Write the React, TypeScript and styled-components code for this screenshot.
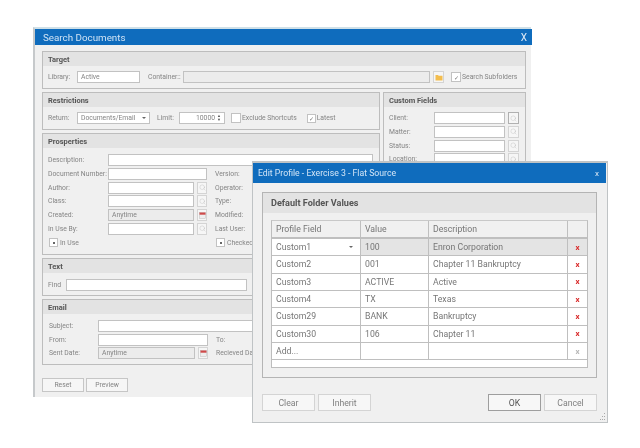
import React from "react";
import styled, { createGlobalStyle } from "styled-components";
import { Search } from "lucide-react";

const GlobalStyle = createGlobalStyle`
  html, body {
    margin: 0;
    background: #fff;
    font-family: Roboto, "Liberation Sans", sans-serif;
  }
`;

const Desktop = styled.div`
  position: relative;
  width: 640px;
  height: 448px;
  overflow: hidden;
  filter: blur(0.25px);
`;

const BackWindow = styled.section`
  position: absolute;
  left: 33px;
  top: 27px;
  width: 498px;
  height: 370px;
  box-sizing: border-box;
  background: #f0f0f0;
  border-left: 2px solid #c6c9cb;
  border-top: 2px solid #cfe0e8;
`;

const TitleBar = styled.header`
  display: flex;
  align-items: center;
  justify-content: space-between;
  height: 16px;
  margin-right: -1px;
  padding: 0 5px 0 8px;
  background: #0f6cbd;
  color: #cfe3f5;
  font-size: 9.8px;
`;

const CloseX = styled.span<{ $big?: boolean }>`
  color: #dfeaf6;
  font-size: ${(p) => (p.$big ? 10 : 8)}px;
`;

const BackBody = styled.div`
  display: grid;
  grid-template-columns: 338px 143px;
  gap: 3px;
  padding: 6px 5px 0 7px;
`;

const Panel = styled.div<{ $wide?: boolean; $tall?: boolean }>`
  box-sizing: border-box;
  border: 1px solid #bdbdbd;
  grid-column: ${(p) => (p.$wide ? "1 / -1" : "auto")};
  grid-row: ${(p) => (p.$tall ? "span 2" : "auto")};
`;

const PanelHead = styled.div`
  height: 14px;
  line-height: 15px;
  padding-left: 5px;
  background: #e3e3e3;
  color: #555;
  font-size: 7.5px;
  font-weight: 700;
`;

const PanelBody = styled.div<{ $pad?: string }>`
  display: flex;
  flex-direction: column;
  gap: 1.8px;
  padding: ${(p) => p.$pad || "5px 6px 5px 5px"};
`;

const Row = styled.div`
  display: flex;
  align-items: center;
  height: 12px;
`;

const Label = styled.span<{ $w?: number; $ml?: number }>`
  flex: none;
  width: ${(p) => (p.$w ? p.$w + "px" : "auto")};
  margin-left: ${(p) => p.$ml ?? 0}px;
  color: #848484;
  font-size: 6.8px;
  white-space: nowrap;
`;

const Box = styled.div<{ $w: number; $grey?: boolean; $right?: boolean }>`
  flex: none;
  display: flex;
  align-items: center;
  justify-content: ${(p) => (p.$right ? "flex-end" : "space-between")};
  box-sizing: border-box;
  width: ${(p) => p.$w}px;
  height: 12px;
  padding: 0 3px;
  background: ${(p) => (p.$grey ? "#ececec" : "#fff")};
  border: 1px solid #c2c2c2;
  color: #848484;
  font-size: 6.8px;
`;

const IconBtn = styled.div<{ $w?: number; $strong?: boolean }>`
  flex: none;
  display: flex;
  align-items: center;
  justify-content: center;
  box-sizing: border-box;
  width: ${(p) => p.$w ?? 11}px;
  height: 12px;
  margin-left: 3px;
  background: #f6f6f6;
  border: 1px solid ${(p) => (p.$strong ? "#b0b0b0" : "#d4d4d4")};
  color: #b5b5b5;
`;

const Tick = styled.div<{ $ml?: number; $size?: number }>`
  flex: none;
  display: flex;
  align-items: center;
  justify-content: center;
  box-sizing: border-box;
  width: ${(p) => p.$size ?? 10}px;
  height: ${(p) => p.$size ?? 10}px;
  margin-left: ${(p) => p.$ml ?? 0}px;
  margin-right: 1px;
  background: #fff;
  border: 1px solid #c2c2c2;
  color: #777;
  font-size: 6px;
`;

const Dot = styled.span`
  width: 2px;
  height: 2px;
  background: #666;
`;

const SpinArrows = styled.span`
  display: flex;
  flex-direction: column;
  margin-left: 2px;
  color: #555;
  font-size: 4px;
  line-height: 4px;
`;

const Caret = styled.span`
  width: 0;
  height: 0;
  border-left: 2px solid transparent;
  border-right: 2px solid transparent;
  border-top: 2px solid #666;
`;

const FootRow = styled.div`
  display: flex;
  gap: 2px;
  padding: 13px 0 0 7px;
`;

const SmallButton = styled.button`
  width: 42px;
  height: 14px;
  padding: 0;
  background: #f6f6f6;
  border: 1px solid #c6c6c6;
  color: #848484;
  font-family: inherit;
  font-size: 6.8px;
`;

const Dialog = styled.section`
  position: absolute;
  left: 252px;
  top: 161px;
  width: 356px;
  height: 262px;
  box-sizing: border-box;
  background: #f0f0f0;
  border: 1px solid #bfc3c5;
  border-top-width: 2px;
`;

const DialogTitle = styled.header`
  display: flex;
  align-items: center;
  justify-content: space-between;
  height: 20px;
  margin-right: 1px;
  padding: 0 7px 0 5px;
  background: #0f6cbd;
  color: #d3e5f6;
  font-size: 8.7px;
`;

const DialogBody = styled.div`
  padding: 9px 10px 0 9px;
`;

const DialogPanel = styled.div`
  box-sizing: border-box;
  border: 1px solid #b4b4b4;
  height: 186px;
`;

const DialogHead = styled.div`
  height: 20px;
  line-height: 20px;
  padding-left: 8px;
  background: #e3e3e3;
  color: #555;
  font-size: 9.1px;
  font-weight: 700;
`;

const Grid = styled.div`
  margin: 7px 8px 0;
  background: #fff;
  border: 1px solid #bdbdbd;
  border-top-color: #c8c8c8;
  height: 148px;
  box-sizing: border-box;
`;

const GridRow = styled.div<{ $head?: boolean; $active?: boolean }>`
  display: grid;
  grid-template-columns: 89px 68px 139px 1fr;
  height: ${(p) => (p.$head ? "18px" : "17.33px")};
  box-sizing: border-box;
  background: ${(p) => (p.$head ? "#f0f0f0" : p.$active ? "#e4e4e4" : "#fff")};
  border-bottom: ${(p) => (p.$head ? 2 : 1)}px solid #bfbfbf;
  color: #767676;
  font-size: 8.7px;
`;

const Cell = styled.div<{ $white?: boolean }>`
  display: flex;
  align-items: center;
  justify-content: space-between;
  padding: 0 7px 0 4px;
  background: ${(p) => (p.$white ? "#fff" : "transparent")};
  border-right: 1px solid #bfbfbf;
  white-space: nowrap;
  &:last-child {
    border-right: 0;
    justify-content: center;
    padding: 0;
  }
`;

const RemoveX = styled.span<{ $off?: boolean }>`
  color: ${(p) => (p.$off ? "#b8b8b8" : "#d92b2b")};
  font-size: 8px;
  font-weight: 700;
`;

const DialogFoot = styled.div`
  display: flex;
  gap: 3px;
  margin-top: 16px;
`;

const Btn = styled.button<{ $strong?: boolean; $push?: boolean }>`
  width: 53px;
  height: 17px;
  padding: 0;
  margin-left: ${(p) => (p.$push ? "auto" : "0")};
  background: #f7f7f7;
  border: 1px solid ${(p) => (p.$strong ? "#9e9e9e" : "#d4d4d4")};
  color: ${(p) => (p.$strong ? "#555" : "#808080")};
  font-family: inherit;
  font-size: 8.7px;
`;

const Grip = styled.svg`
  position: absolute;
  right: 1px;
  bottom: 1px;
`;

const Mag = () => <Search size={7} strokeWidth={1.2} />;

const CalendarIcon = () => (
  <svg width="7" height="7" viewBox="0 0 7 7">
    <rect x="0.5" y="0.5" width="6" height="6" fill="#eee" stroke="#bbb" strokeWidth="0.5" />
    <rect x="0.5" y="0.5" width="6" height="2.2" fill="#cf4a4a" />
  </svg>
);

const FolderIcon = () => (
  <svg width="8" height="7" viewBox="0 0 8 7">
    <path d="M0.5 1h2.5l0.7 0.8h3.8v4.7h-7z" fill="#f3bd4e" />
  </svg>
);

const GripIcon = () => (
  <Grip width="8" height="8" viewBox="0 0 8 8">
    <g fill="#a9a9a9">
      <rect x="6" y="0" width="1" height="1" />
      <rect x="4" y="3" width="1" height="1" />
      <rect x="6" y="3" width="1" height="1" />
      <rect x="2" y="6" width="1" height="1" />
      <rect x="4" y="6" width="1" height="1" />
      <rect x="6" y="6" width="1" height="1" />
    </g>
  </Grip>
);

const customFields = ["Client:", "Matter:", "Status:", "Location:"];

const tableRows = [
  ["Custom2", "001", "Chapter 11 Bankruptcy"],
  ["Custom3", "ACTIVE", "Active"],
  ["Custom4", "TX", "Texas"],
  ["Custom29", "BANK", "Bankruptcy"],
  ["Custom30", "106", "Chapter 11"],
];

export default function App() {
  return (
    <Desktop>
      <GlobalStyle />
      <BackWindow>
        <TitleBar>
          <span>Search Documents</span>
          <CloseX $big>X</CloseX>
        </TitleBar>
        <BackBody>
          <Panel $wide>
            <PanelHead>Target</PanelHead>
            <PanelBody>
              <Row>
                <Label $w={29}>Library:</Label>
                <Box $w={63}>Active</Box>
                <Label $w={35} $ml={8}>Container::</Label>
                <Box $w={247} $grey />
                <IconBtn><FolderIcon /></IconBtn>
                <Tick $ml={7}>✓</Tick>
                <Label>Search Subfolders</Label>
              </Row>
            </PanelBody>
          </Panel>

          <Panel>
            <PanelHead>Restrictions</PanelHead>
            <PanelBody>
              <Row>
                <Label $w={29}>Return:</Label>
                <Box $w={73}>Documents/Email<Caret /></Box>
                <Label $w={22} $ml={7}>Limit:</Label>
                <Box $w={46} $right>10000<SpinArrows><span>▲</span><span>▼</span></SpinArrows></Box>
                <Tick $ml={6}></Tick>
                <Label>Exclude Shortcuts</Label>
                <Tick $ml={10} $size={9}>✓</Tick>
                <Label>Latest</Label>
              </Row>
            </PanelBody>
          </Panel>

          <Panel $tall>
            <PanelHead>Custom Fields</PanelHead>
            <PanelBody>
              {customFields.map((name, i) => (
                <Row key={name}>
                  <Label $w={45}>{name}</Label>
                  <Box $w={71} />
                  <IconBtn $strong={i === 0}><Mag /></IconBtn>
                </Row>
              ))}
            </PanelBody>
          </Panel>

          <Panel>
            <PanelHead>Prosperties</PanelHead>
            <PanelBody $pad="6px 6px 5px 5px">
              <Row><Label $w={60}>Description:</Label><Box $w={265} /></Row>
              <Row>
                <Label $w={60}>Document Number:</Label>
                <Box $w={99} />
                <Label $ml={8}>Version:</Label>
              </Row>
              <Row>
                <Label $w={60}>Author:</Label>
                <Box $w={86} />
                <IconBtn $w={10}><Mag /></IconBtn>
                <Label $ml={8}>Operator:</Label>
              </Row>
              <Row>
                <Label $w={60}>Class:</Label>
                <Box $w={86} />
                <IconBtn $w={10}><Mag /></IconBtn>
                <Label $ml={8}>Type:</Label>
              </Row>
              <Row>
                <Label $w={60}>Created:</Label>
                <Box $w={86} $grey>Anytime</Box>
                <IconBtn $w={10}><CalendarIcon /></IconBtn>
                <Label $ml={8}>Modified:</Label>
              </Row>
              <Row>
                <Label $w={60}>In Use By:</Label>
                <Box $w={86} />
                <IconBtn $w={10}><Mag /></IconBtn>
                <Label $ml={8}>Last User:</Label>
              </Row>
              <Row>
                <Tick $ml={1} $size={9}><Dot /></Tick>
                <Label $w={20} $ml={1}>In Use</Label>
                <Tick $ml={136} $size={9}><Dot /></Tick>
                <Label $ml={1}>Checked Out</Label>
              </Row>
            </PanelBody>
          </Panel>

          <Panel $wide>
            <PanelHead>Text</PanelHead>
            <PanelBody $pad="6px 6px 4px 5px">
              <Row>
                <Label $w={18}>Find</Label>
                <Box $w={181} />
              </Row>
            </PanelBody>
          </Panel>

          <Panel $wide>
            <PanelHead>Email</PanelHead>
            <PanelBody $pad="6px 6px 5px 6px">
              <Row><Label $w={49}>Subject:</Label><Box $w={265} /></Row>
              <Row>
                <Label $w={49}>From:</Label>
                <Box $w={110} />
                <Label $ml={8}>To:</Label>
              </Row>
              <Row>
                <Label $w={49}>Sent Date:</Label>
                <Box $w={97} $grey>Anytime</Box>
                <IconBtn $w={10}><CalendarIcon /></IconBtn>
                <Label $ml={8}>Recieved Date:</Label>
              </Row>
            </PanelBody>
          </Panel>
        </BackBody>
        <FootRow>
          <SmallButton>Reset</SmallButton>
          <SmallButton>Preview</SmallButton>
        </FootRow>
      </BackWindow>

      <Dialog>
        <DialogTitle>
          <span>Edit Profile - Exercise 3 - Flat Source</span>
          <CloseX>x</CloseX>
        </DialogTitle>
        <DialogBody>
          <DialogPanel>
            <DialogHead>Default Folder Values</DialogHead>
            <Grid>
              <GridRow $head>
                <Cell>Profile Field</Cell>
                <Cell>Value</Cell>
                <Cell>Description</Cell>
                <Cell />
              </GridRow>
              <GridRow $active>
                <Cell $white>Custom1<Caret /></Cell>
                <Cell>100</Cell>
                <Cell>Enron Corporation</Cell>
                <Cell><RemoveX>x</RemoveX></Cell>
              </GridRow>
              {tableRows.map((r) => (
                <GridRow key={r[0]}>
                  <Cell>{r[0]}</Cell>
                  <Cell>{r[1]}</Cell>
                  <Cell>{r[2]}</Cell>
                  <Cell><RemoveX>x</RemoveX></Cell>
                </GridRow>
              ))}
              <GridRow>
                <Cell>Add...</Cell>
                <Cell />
                <Cell />
                <Cell><RemoveX $off>x</RemoveX></Cell>
              </GridRow>
            </Grid>
          </DialogPanel>
          <DialogFoot>
            <Btn>Clear</Btn>
            <Btn>Inherit</Btn>
            <Btn $push $strong>OK</Btn>
            <Btn>Cancel</Btn>
          </DialogFoot>
        </DialogBody>
        <GripIcon />
      </Dialog>
    </Desktop>
  );
}
